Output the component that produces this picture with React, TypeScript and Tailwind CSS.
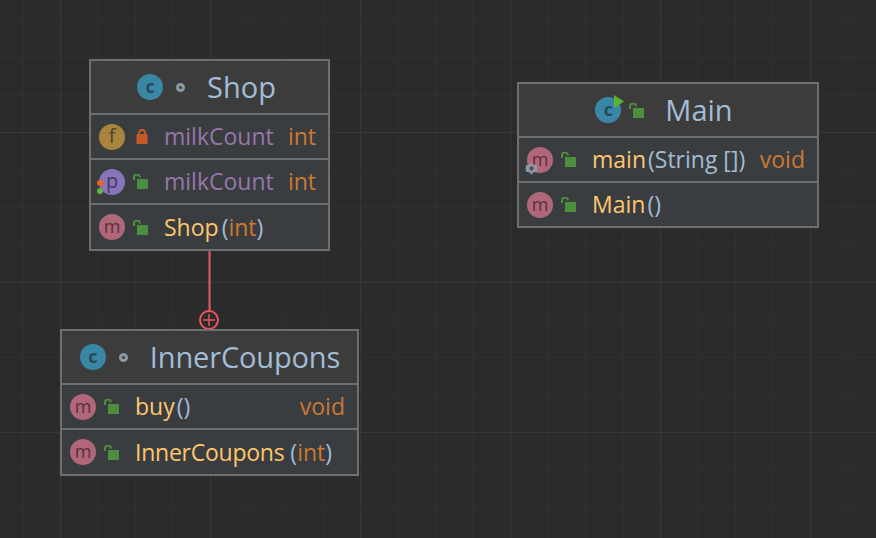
import type { ReactNode } from "react";

const font = { fontFamily: '"Open Sans", "Noto Sans", sans-serif' };

function Badge({ letter, kind }: { letter: string; kind: "c" | "m" | "f" | "p" }) {
  const bg = { c: "bg-[#3a87a5]", m: "bg-[#b0677a]", f: "bg-[#a8843f]", p: "bg-[#8874b8]" }[kind];
  const fg = {
    c: "text-[#264a5c] font-bold text-[18px]",
    m: "text-[#5a3038] text-[18px]",
    f: "text-[#54422a] text-[20px]",
    p: "text-[#43395e] text-[20px]",
  }[kind];
  return (
    <span className={`flex h-[26px] w-[26px] shrink-0 items-center justify-center rounded-full ${bg} ${fg} leading-none`}>
      <span className="relative top-[-1px]">{letter}</span>
    </span>
  );
}

function Lock({ open = true }: { open?: boolean }) {
  if (!open) {
    return (
      <svg width="15" height="15" viewBox="0 0 15 15" className="shrink-0">
        <path d="M6 7V4a3 3 0 0 1 6 0V7" fill="none" stroke="#c4592b" strokeWidth="2" />
        <rect x="3.500" y="5" width="11" height="10" fill="#c4592b" />
      </svg>
    );
  }
  return (
    <svg width="15" height="15" viewBox="0 0 15 15" className="shrink-0">
      <path d="M1 6V3.500a3 3 0 0 1 6 0" fill="none" stroke="#4e8f3f" strokeWidth="2" />
      <rect x="4" y="5" width="11" height="10" fill="#4e8f3f" />
    </svg>
  );
}

function Dot() {
  return <span className="h-[9px] w-[9px] shrink-0 rounded-full border-[3px] border-[#8d9aa3]" />;
}

function Row({ icon, lock, right, tall, children }: { icon: ReactNode; lock: ReactNode; right?: ReactNode; tall?: boolean; children: ReactNode }) {
  return (
    <div className={`flex items-center border-t-2 border-[#6f6f6f] bg-[#3a3d40] pl-2 pr-3 text-[23px] leading-none ${tall ? "h-[46px]" : "h-[45px]"}`}>
      <span className="relative w-[26px] shrink-0">{icon}</span>
      <span className="ml-[8px] flex w-[31px] shrink-0 items-center">{lock}</span>
      <span className="whitespace-pre">{children}</span>
      {right && <span className="ml-auto text-[#cc7832]">{right}</span>}
    </div>
  );
}

function Node({ pos, title, titleClass, icon, mid, children, pad }: { pos: string; title: string; titleClass: string; icon: ReactNode; mid: ReactNode; children: ReactNode; pad: string }) {
  return (
    <div className={`absolute border-2 border-[#6f6f6f] bg-[#3c3c3c] ${pos}`}>
      <div className={`flex h-[52px] items-center justify-center text-[29px] leading-none text-[#a3bcd6] ${pad}`}>
        {icon}
        {mid}
        <span className={`relative top-[-1px] ${titleClass}`}>{title}</span>
      </div>
      {children}
    </div>
  );
}

const Method = ({ children, tight }: { children: string; tight?: boolean }) => (
  <span className={tight ? "tracking-[-0.25px] text-[#ffc66d]" : "text-[#ffc66d]"}>{children}</span>
);
const Param = ({ children }: { children: string }) => <span className="text-[#a3bcd6]">{children}</span>;
const Type = ({ children }: { children: string }) => <span className="text-[#cc7832]">{children}</span>;
const Field = ({ children }: { children: string }) => <span className="text-[#9876aa]">{children}</span>;

export default function App() {
  return (
    <div
      className="relative h-[538px] w-[876px] overflow-hidden bg-[#2b2b2b] bg-[linear-gradient(to_right,#383838_1px,transparent_1px),linear-gradient(to_bottom,#383838_1px,transparent_1px),linear-gradient(to_right,#313131_1px,transparent_1px),linear-gradient(to_bottom,#313131_1px,transparent_1px)] bg-[size:150px_150px,150px_150px,37.5px_37.5px,37.5px_37.5px] bg-[position:60px_0,0_132px,22.5px_0,0_19.5px]"
      style={font}
    >
      <Node
        pos="left-[89px] top-[59px] w-[241px]"
        title="Shop"
        titleClass="ml-[22px]"
        pad="pr-[6px]"
        icon={<Badge letter="c" kind="c" />}
        mid={<span className="ml-[13px] flex"><Dot /></span>}
      >
        <Row icon={<Badge letter="f" kind="f" />} lock={<Lock open={false} />} right="int">
          <Field>milkCount</Field>
        </Row>
        <Row
          icon={
            <>
              <Badge letter="p" kind="p" />
              <span className="absolute left-[-2px] top-[11px] h-[6px] w-[6px] rounded-full bg-[#f2611b]" />
              <span className="absolute left-[-2px] top-[19px] h-[6px] w-[6px] rounded-full bg-[#62b543]" />
            </>
          }
          lock={<Lock />}
          right="int"
        >
          <Field>milkCount</Field>
        </Row>
        <Row tall icon={<Badge letter="m" kind="m" />} lock={<Lock />}>
          <Method>Shop</Method><span className="ml-[3px]"><Param>(</Param><Type>int</Type><Param>)</Param></span>
        </Row>
      </Node>

      <Node
        pos="left-[517px] top-[82px] w-[302px]"
        title="Main"
        titleClass="ml-[21px]"
        pad="pr-[8px]"
        icon={
          <span className="relative">
            <Badge letter="c" kind="c" />
            <svg width="10" height="13" viewBox="0 0 10 13" className="absolute left-[19px] top-[-2px]">
              <path d="M0 0L10 6.500L0 13Z" fill="#5cb531" />
            </svg>
          </span>
        }
        mid={<span className="ml-[8px] flex"><Lock /></span>}
      >
        <Row
          icon={
            <>
              <Badge letter="m" kind="m" />
              <svg width="13" height="13" viewBox="0 0 12 12" className="absolute left-[-2px] top-[15px]">
                <path d="M6 0.500L8 2.500L11 3L11.500 6L11 9L8 9.500L6 11.500L4 9.500L1 9L0.500 6L1 3L4 2.500Z" fill="#8d9aa3" />
                <circle cx="6" cy="6" r="2" fill="#5d4a52" />
              </svg>
            </>
          }
          lock={<Lock />}
          right="void"
        >
          <Method>main</Method><span className="ml-[2px]"><Param>(String [])</Param></span>
        </Row>
        <Row icon={<Badge letter="m" kind="m" />} lock={<Lock />}>
          <Method>Main</Method><span className="ml-[2px]"><Param>()</Param></span>
        </Row>
      </Node>

      {/* inner class connector */}
      <svg width="24" height="80" viewBox="0 0 24 80" className="absolute left-[197px] top-[251px]">
        <path d="M12.500 0V60" stroke="#e05a64" strokeWidth="2" fill="none" />
        <circle cx="12" cy="69" r="9" stroke="#f0545f" strokeWidth="2" fill="#2b2b2b" />
        <path d="M12 63V75M6 69H18" stroke="#f0545f" strokeWidth="1.500" fill="none" />
      </svg>

      <Node
        pos="left-[60px] top-[329px] w-[299px]"
        title="InnerCoupons"
        titleClass="ml-[22px] tracking-[-0.15px]"
        pad="pl-[1px]"
        icon={<Badge letter="c" kind="c" />}
        mid={<span className="ml-[13px] flex"><Dot /></span>}
      >
        <Row icon={<Badge letter="m" kind="m" />} lock={<Lock />} right="void">
          <Method>buy</Method><span className="ml-[2px]"><Param>()</Param></span>
        </Row>
        <Row tall icon={<Badge letter="m" kind="m" />} lock={<Lock />}>
          <Method tight>InnerCoupons</Method><Param> (</Param><Type>int</Type><Param>)</Param>
        </Row>
      </Node>
    </div>
  );
}
